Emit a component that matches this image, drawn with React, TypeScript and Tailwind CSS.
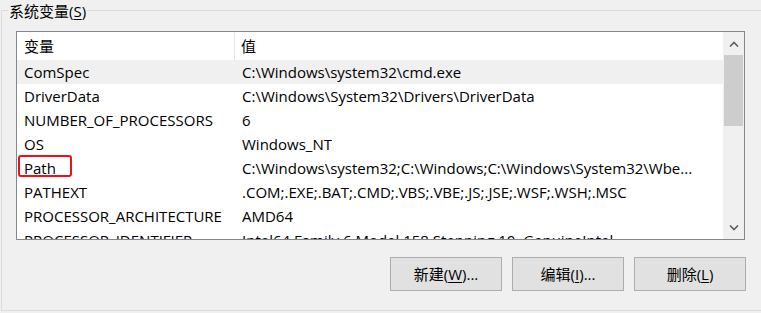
const font = { fontFamily: '"Open Sans", "Noto Sans CJK SC", sans-serif' };

const rows: [string, string][] = [
  ['ComSpec', 'C:\\Windows\\system32\\cmd.exe'],
  ['DriverData', 'C:\\Windows\\System32\\Drivers\\DriverData'],
  ['NUMBER_OF_PROCESSORS', '6'],
  ['OS', 'Windows_NT'],
  ['Path', 'C:\\Windows\\system32;C:\\Windows;C:\\Windows\\System32\\Wbe...'],
  ['PATHEXT', '.COM;.EXE;.BAT;.CMD;.VBS;.VBE;.JS;.JSE;.WSF;.WSH;.MSC'],
  ['PROCESSOR_ARCHITECTURE', 'AMD64'],
  ['PROCESSOR_IDENTIFIER', 'Intel64 Family 6 Model 158 Stepping 10, GenuineIntel'],
];

function Chevron({ up }: { up?: boolean }) {
  return (
    <svg width="10" height="6" viewBox="0 0 10 6" className="block">
      <path
        d={up ? 'M1 5.5 L5 1.5 L9 5.5' : 'M1 0.5 L5 4.5 L9 0.5'}
        fill="none"
        stroke="#606060"
        strokeWidth="1.6"
      />
    </svg>
  );
}

function Button({ label, hot, tail }: { label: string; hot: string; tail: string }) {
  return (
    <div className="w-[112px] h-[34px] bg-[#e1e1e1] border border-[#adadad] flex items-center justify-center text-[15px] text-black">
      {label}(<span className="underline underline-offset-2">{hot}</span>){tail}
    </div>
  );
}

export default function App() {
  return (
    <div className="w-[761px] h-[313px] bg-[#f0f0f0] overflow-hidden pt-[10px] pl-[1px]" style={font}>
      {/* Group box */}
      <div className="relative h-[301px] border-l border-t border-b border-[#dcdcdc] pt-[20px] pl-[14px]">
        <div className="absolute left-[6px] -top-[10px] px-[1px] bg-[#f0f0f0] text-[15px] leading-[20px] text-black">
          系统变量(<span className="underline underline-offset-2">S</span>)
        </div>

        {/* List view */}
        <div className="w-[729px] h-[209px] border border-[#828790] bg-white flex overflow-hidden">
          <div className="w-[706px] text-[15px] text-black">
            <div className="h-[28px] flex items-center">
              <div className="w-[218px] h-full flex items-center pl-[7px] border-r border-[#e5e5e5]">变量</div>
              <div className="pl-[6px]">值</div>
            </div>
            {rows.map(([k, v], i) => (
              <div key={k} className={`h-[24px] flex items-center whitespace-nowrap ${i === 0 ? 'bg-[#f0f0f0]' : ''}`}>
                <div className="relative w-[219px] pl-[7px] h-full flex items-center">
                  {k}
                  {k === 'Path' && (
                    <div className="absolute left-[1px] -top-[1px] w-[54px] h-[22px] border-2 border-[#f0101c] rounded-[3px]" />
                  )}
                </div>
                <div className="pl-[6px] overflow-hidden">{v}</div>
              </div>
            ))}
          </div>

          {/* Scrollbar */}
          <div className="w-[21px] h-full bg-[#f0f0f0] flex flex-col items-center">
            <div className="h-[23px] flex items-center justify-center">
              <Chevron up />
            </div>
            <div className="w-[19px] h-[71px] bg-[#cdcdcd]" />
            <div className="flex-1" />
            <div className="h-[23px] flex items-center justify-center">
              <Chevron />
            </div>
          </div>
        </div>

        {/* Buttons */}
        <div className="flex gap-[10px] mt-[17px] pl-[374px]">
          <Button label="新建" hot="W" tail="..." />
          <Button label="编辑" hot="I" tail="..." />
          <Button label="删除" hot="L" tail="" />
        </div>
      </div>
    </div>
  );
}
